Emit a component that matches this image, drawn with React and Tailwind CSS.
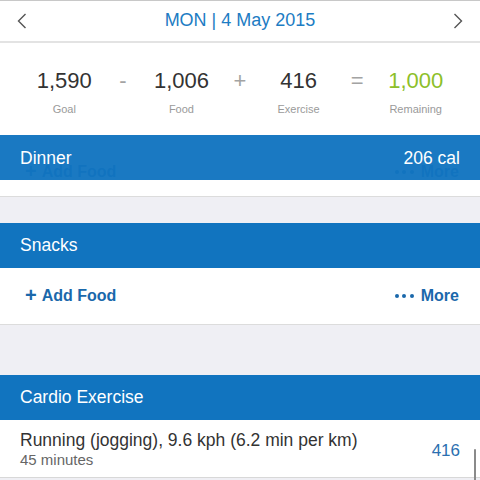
import React from "react";

const font = { fontFamily: '"Liberation Sans", Arial, sans-serif' };

function Chevron({ dir }) {
  return (
    <svg width="10" height="16" viewBox="0 0 10 16" className="block">
      {dir === "left" ? (
        <polyline points="8.5,1 1.5,8 8.5,15" fill="none" stroke="#555" strokeWidth="1.4" />
      ) : (
        <polyline points="1.5,1 8.5,8 1.5,15" fill="none" stroke="#555" strokeWidth="1.4" />
      )}
    </svg>
  );
}

function Stat({ value, label, green }) {
  return (
    <div className="flex flex-col items-center">
      <div className={`text-[22px] leading-[26px] ${green ? "text-[#8dbf2a]" : "text-[#333]"}`}>{value}</div>
      <div className="text-[11px] leading-[14px] mt-[8px] text-[#9a9a9a]">{label}</div>
    </div>
  );
}

function Op({ children }) {
  return (
    <div className="flex flex-col items-center">
      <div className="text-[22px] leading-[26px] text-[#a3a3a3]">{children}</div>
    </div>
  );
}

function Bar({ title, right, className = "" }) {
  return (
    <div className={`h-[45px] flex items-center justify-between px-[20px] text-white text-[17.5px] ${className}`}>
      <span>{title}</span>
      {right && <span>{right}</span>}
    </div>
  );
}

function AddRow() {
  return (
    <div className="h-[56px] flex items-center justify-between pl-[25px] pr-[21px] text-[16px] font-bold text-[#1a68ab]">
      <span className="flex items-center">
        <span className="text-[20px] leading-none mr-[5px] -mt-[2px]">+</span>Add Food
      </span>
      <span className="flex items-center">
        <span className="flex items-center gap-[3.5px] mr-[7px]">
          <span className="w-[4px] h-[4px] rounded-full bg-[#1a68ab]" />
          <span className="w-[4px] h-[4px] rounded-full bg-[#1a68ab]" />
          <span className="w-[4px] h-[4px] rounded-full bg-[#1a68ab]" />
        </span>
        More
      </span>
    </div>
  );
}

export default function App() {
  return (
    <div className="w-[480px] h-[480px] overflow-hidden bg-[#efeff4] relative" style={font}>
      <div className="h-[1px] bg-[#c8c8c8]" />
      <div className="h-[42px] bg-white flex items-center justify-between px-[17px] border-b-2 border-[#e3e3e3]">
        <Chevron dir="left" />
        <div className="text-[18px] text-[#1d7cc3] -mt-[1px]">MON | 4 May 2015</div>
        <Chevron dir="right" />
      </div>
      <div className="h-[92px] bg-white grid grid-cols-7 px-[35px] pt-[25px]">
        <Stat value="1,590" label="Goal" />
        <Op>-</Op>
        <Stat value="1,006" label="Food" />
        <Op>+</Op>
        <Stat value="416" label="Exercise" />
        <Op>=</Op>
        <Stat value="1,000" label="Remaining" green />
      </div>

      <div className="relative bg-white h-[62px] border-b border-[#dcdcdc] overflow-hidden">
        <div className="pt-[9px]">
          <AddRow />
        </div>
        <div className="absolute left-0 right-0 top-0">
          <Bar title="Dinner" right="206 cal" className="bg-[#1174bf]/[0.96] pt-[1px]" />
        </div>
      </div>

      <div className="h-[26px]" />
      <Bar title="Snacks" className="h-[44px] bg-[#1174bf]" />
      <div className="bg-white border-b border-[#dcdcdc] h-[57px]">
        <AddRow />
      </div>

      <div className="h-[50px]" />
      <Bar title="Cardio Exercise" className="bg-[#1174bf]" />
      <div className="h-[58px] bg-white border-b border-[#d8d8d8] flex items-center justify-between pl-[20px] pr-[20px] relative">
        <div className="flex flex-col mt-[2px]">
          <div className="text-[17.5px] leading-[20px] text-[#333]">Running (jogging), 9.6 kph (6.2 min per km)</div>
          <div className="text-[15px] leading-[18px] text-[#666] mt-[1px]">45 minutes</div>
        </div>
        <div className="text-[17px] text-[#2b6fb0] mt-[5px]">416</div>
        <div className="absolute right-[4px] top-[29px] w-[2.5px] h-[40px] bg-[#8a8a8a] rounded-full" />
      </div>
    </div>
  );
}
